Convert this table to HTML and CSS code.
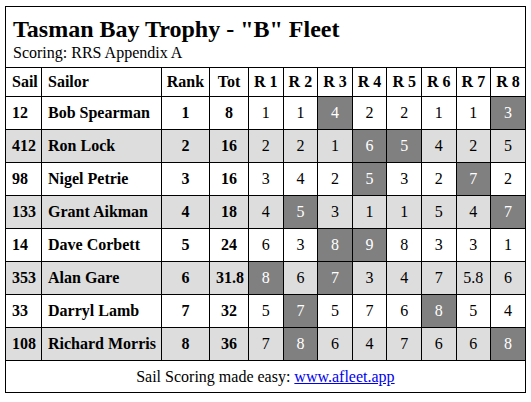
FILE: index.html
```html
<!DOCTYPE html>
<html>
<head>
<meta charset="utf-8">
<link rel="stylesheet" href="styles.css">
</head>
<body>
<table class="results">
  <colgroup>
    <col class="c-sail"><col class="c-sailor"><col class="c-rank"><col class="c-tot">
    <col class="c-r"><col class="c-r"><col class="c-r"><col class="c-r">
    <col class="c-r"><col class="c-r"><col class="c-r"><col class="c-r">
  </colgroup>
  <thead>
    <tr class="title-row">
      <td colspan="12" class="title-cell">
        <div class="title">Tasman Bay Trophy - "B" Fleet</div>
        <div class="subtitle">Scoring: RRS Appendix A</div>
      </td>
    </tr>
    <tr class="head-row">
      <th class="left">Sail</th><th class="left">Sailor</th><th>Rank</th><th>Tot</th>
      <th>R 1</th><th>R 2</th><th>R 3</th><th>R 4</th><th>R 5</th><th>R 6</th><th>R 7</th><th>R 8</th>
    </tr>
  </thead>
  <tbody>
    <tr><td class="b left">12</td><td class="b left">Bob Spearman</td><td class="b">1</td><td class="b">8</td>
      <td>1</td><td>1</td><td class="d">4</td><td>2</td><td>2</td><td>1</td><td>1</td><td class="d">3</td></tr>
    <tr class="alt"><td class="b left">412</td><td class="b left">Ron Lock</td><td class="b">2</td><td class="b">16</td>
      <td>2</td><td>2</td><td>1</td><td class="d">6</td><td class="d">5</td><td>4</td><td>2</td><td>5</td></tr>
    <tr><td class="b left">98</td><td class="b left">Nigel Petrie</td><td class="b">3</td><td class="b">16</td>
      <td>3</td><td>4</td><td>2</td><td class="d">5</td><td>3</td><td>2</td><td class="d">7</td><td>2</td></tr>
    <tr class="alt"><td class="b left">133</td><td class="b left">Grant Aikman</td><td class="b">4</td><td class="b">18</td>
      <td>4</td><td class="d">5</td><td>3</td><td>1</td><td>1</td><td>5</td><td>4</td><td class="d">7</td></tr>
    <tr><td class="b left">14</td><td class="b left">Dave Corbett</td><td class="b">5</td><td class="b">24</td>
      <td>6</td><td>3</td><td class="d">8</td><td class="d">9</td><td>8</td><td>3</td><td>3</td><td>1</td></tr>
    <tr class="alt"><td class="b left">353</td><td class="b left">Alan Gare</td><td class="b">6</td><td class="b">31.8</td>
      <td class="d">8</td><td>6</td><td class="d">7</td><td>3</td><td>4</td><td>7</td><td>5.8</td><td>6</td></tr>
    <tr><td class="b left">33</td><td class="b left">Darryl Lamb</td><td class="b">7</td><td class="b">32</td>
      <td>5</td><td class="d">7</td><td>5</td><td>7</td><td>6</td><td class="d">8</td><td>5</td><td>4</td></tr>
    <tr class="alt"><td class="b left">108</td><td class="b left">Richard Morris</td><td class="b">8</td><td class="b">36</td>
      <td>7</td><td class="d">8</td><td>6</td><td>4</td><td>7</td><td>6</td><td>6</td><td class="d">8</td></tr>
  </tbody>
  <tfoot>
    <tr class="foot-row">
      <td colspan="12">Sail Scoring made easy: <a href="#">www.afleet.app</a></td>
    </tr>
  </tfoot>
</table>
</body>
</html>
```

FILE: styles.css
```css
html, body {
  background: #fff;
}
body {
  margin: 6px 0 0 5px;
  font-family: "Liberation Serif", "Times New Roman", serif;
  font-size: 16px;
  color: #000;
}
.results {
  border-collapse: collapse;
  table-layout: fixed;
  width: 520px;
  border: 1px solid #000;
}
.c-sail { width: 36px; }
.c-sailor { width: 120px; }
.c-rank { width: 48px; }
.c-tot { width: 39px; }
.c-r { width: 34.6px; }
.results td, .results th {
  border: 1px solid #000;
  padding: 0 6px;
  text-align: center;
  white-space: nowrap;
}
.results .left { text-align: left; }
.title-row td.title-cell {
  text-align: left;
  padding: 8px 7px 0 7px;
  height: 52px;
  vertical-align: top;
}
.title {
  font-size: 24px;
  font-weight: bold;
  line-height: 28px;
}
.subtitle {
  font-size: 16px;
  line-height: 19px;
  margin-top: 0;
}
.head-row th {
  height: 28px;
  font-weight: bold;
  padding: 0 4px;
}
.head-row th.left { padding-left: 6px; }
tbody td {
  height: 32px;
}
tbody td.b { font-weight: bold; }
tbody tr.alt td { background: #dddddd; }
tbody td.d, tbody tr.alt td.d {
  background: #808080;
  color: #fff;
}
.foot-row td {
  height: 31px;
  text-align: center;
}
.foot-row a {
  color: #0000ee;
  text-decoration: underline;
}
```
